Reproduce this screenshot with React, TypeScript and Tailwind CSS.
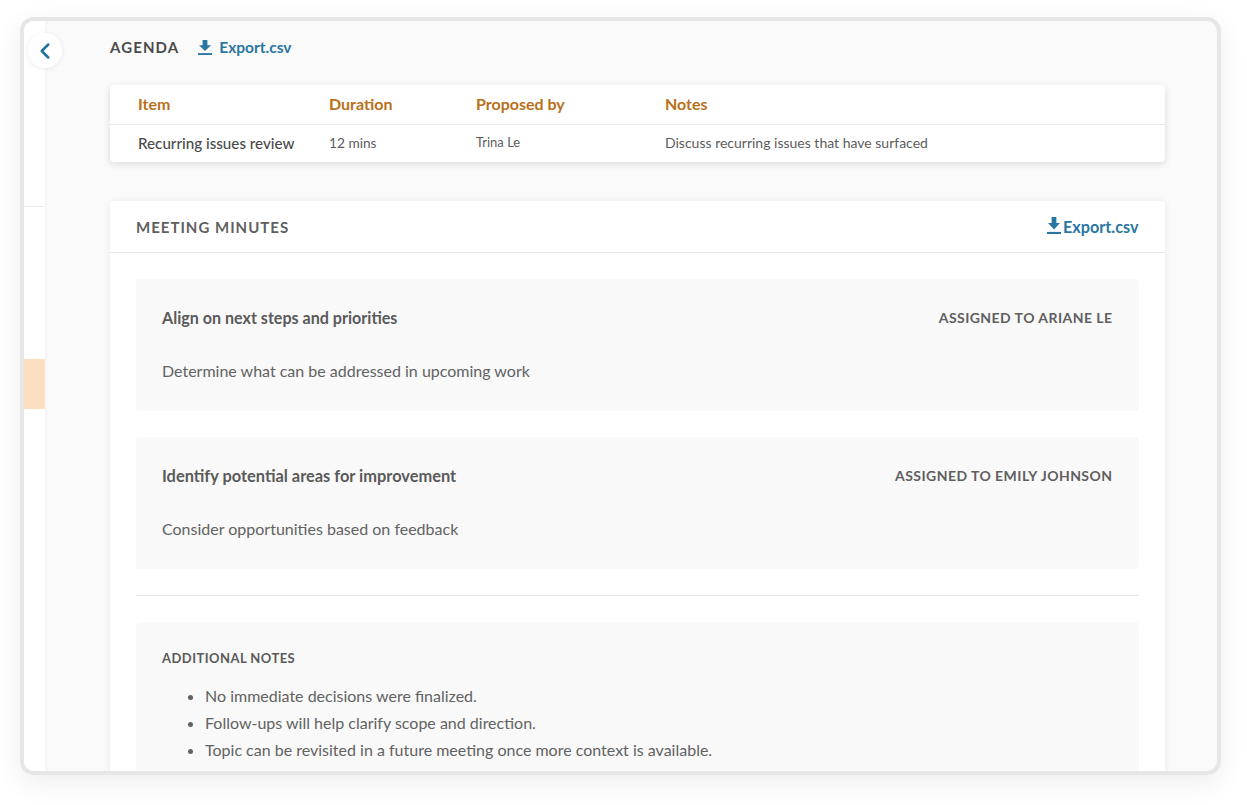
import { ChevronLeft } from "lucide-react";

const lato = "font-['Lato','Noto_Sans',sans-serif]";

// Solid download glyph: arrow over a tray line.
function DownloadIcon({ className }: { className: string }) {
  return (
    <svg viewBox="0 0 14 16" preserveAspectRatio="none" className={className} fill="currentColor">
      <path d="M4.6 0h4.8v5.6h3.6L7 11.7 1 5.6h3.6z" />
      <rect x="0" y="14" width="14" height="2" />
    </svg>
  );
}

function Task({ title, owner, body, titleClass }: { title: string; owner: string; body: string; titleClass: string }) {
  return (
    <div className="h-[132px] rounded-[4px] bg-[#f9f9f9] px-[26px] pt-[28px]">
      <div className="flex items-center justify-between h-[22px]">
        <div className={`font-bold text-[#5a5a5a] ${titleClass}`}>{title}</div>
        <div className="mb-[1px] mr-[0.5px] text-[14px] font-bold tracking-[0.45px] text-[#5f5f5f]">{owner}</div>
      </div>
      <div className="mt-[31px] text-[16px] leading-[22px] text-[#626262]">{body}</div>
    </div>
  );
}

export default function App() {
  return (
    <div className={`h-[805px] w-[1247px] overflow-hidden bg-white pt-[17px] pl-[20px] ${lato}`}>
      <div className="relative flex h-[758px] w-[1201px] overflow-hidden rounded-[14px] border-4 border-[#e6e6e6] bg-[#fafafa] shadow-[0_8px_28px_rgba(0,0,0,0.07)]">
        {/* left rail */}
        <div className="w-[21px] shrink-0 bg-white">
          <div className="mt-[185px] border-t border-[#ececec]" />
          <div className="mt-[152px] h-[50px] bg-[#fbdfc0]" />
        </div>

        <button className="absolute left-[4px] top-[12px] flex h-[35px] w-[34px] items-center justify-center rounded-full bg-white text-[#1f72a3] shadow-[0_1px_5px_rgba(0,0,0,0.08)]">
          <ChevronLeft size={26} strokeWidth={2.3} />
        </button>

        <div className="min-w-0 flex-1 pl-[65px] pr-[52px] shadow-[inset_6px_0_6px_-6px_rgba(0,0,0,0.04)]">
          <div className="flex h-[64px] items-center">
            <div className="mt-[-11px] flex items-center">
              <span className="text-[15px] font-bold tracking-[1.1px] text-[#4a4a4a]">AGENDA</span>
              <span className="ml-[19px] flex items-center gap-[7px] text-[15.5px] font-bold text-[#2a76a3]">
                <DownloadIcon className="h-[15px] w-[14px]" />
                Export.csv
              </span>
            </div>
          </div>

          <div className="rounded-[4px] bg-white shadow-[0_2px_7px_rgba(0,0,0,0.13)]">
            <div className="grid h-[40px] grid-cols-[191px_147px_189px_1fr] items-center border-b border-[#e9e9e9] pb-[2px] pl-[28px] text-[16px] font-bold text-[#b9701a]">
              <div>Item</div>
              <div>Duration</div>
              <div>Proposed by</div>
              <div>Notes</div>
            </div>
            <div className="grid h-[37px] grid-cols-[191px_147px_189px_1fr] items-center pb-[2px] pl-[28px] text-[14px] text-[#5c5c5c]">
              <div className="mt-[1px] text-[15.2px] font-medium text-[#4a4a4a]">Recurring issues review</div>
              <div className="mt-[1px] text-[13.7px]">12 mins</div>
              <div className="mt-[1px] text-[13px]">Trina Le</div>
              <div>Discuss recurring issues that have surfaced</div>
            </div>
          </div>

          <div className="mt-[39px] rounded-t-[4px] bg-white shadow-[0_0_7px_rgba(0,0,0,0.07)]">
            <div className="flex h-[52px] items-center justify-between border-b border-[#e8e8e8] px-[26px] pt-[1px]">
              <span className="text-[15px] font-bold tracking-[1px] text-[#5f5f5f]">MEETING MINUTES</span>
              <span className="mr-[0.5px] flex items-center gap-[2px] text-[16.2px] font-bold text-[#2a76a3]">
                <DownloadIcon className="mb-[3px] h-[17px] w-[14px]" />
                Export.csv
              </span>
            </div>
            <div className="px-[26px] pt-[26px]">
              <div className="flex flex-col gap-[26px]">
                <Task
                  title="Align on next steps and priorities"
                  owner="ASSIGNED TO ARIANE LE"
                  body="Determine what can be addressed in upcoming work"
                  titleClass="text-[16.1px]"
                />
                <Task
                  title="Identify potential areas for improvement"
                  owner="ASSIGNED TO EMILY JOHNSON"
                  body="Consider opportunities based on feedback"
                  titleClass="text-[16.4px]"
                />
              </div>
              <div className="my-[26px] border-t border-[#e5e5e5]" />
              <div className="h-[200px] rounded-t-[4px] bg-[#f9f9f9] px-[26px] pt-[27px]">
                <div className="text-[13px] font-bold leading-[18px] tracking-[0.45px] text-[#5a5a5a]">ADDITIONAL NOTES</div>
                <ul className="mt-[15px] list-disc pl-[43px] text-[16px] leading-[27px] text-[#626262]">
                  <li>No immediate decisions were finalized.</li>
                  <li>Follow-ups will help clarify scope and direction.</li>
                  <li>Topic can be revisited in a future meeting once more context is available.</li>
                </ul>
              </div>
            </div>
          </div>
        </div>
      </div>
    </div>
  );
}
